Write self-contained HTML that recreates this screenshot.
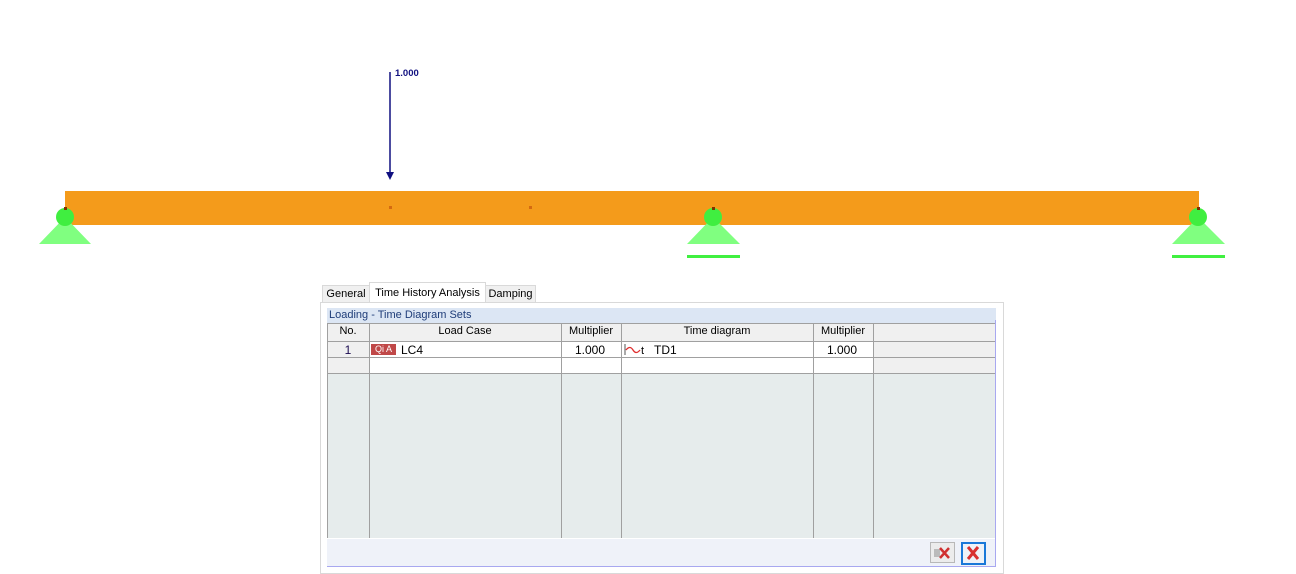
<!DOCTYPE html>
<html><head><style>
body{margin:0;width:1296px;height:569px;background:#fff;position:relative;overflow:hidden;font-family:"Liberation Sans",sans-serif;font-size:11px;color:#000}
.a{position:absolute}
.vl{position:absolute;top:323px;height:215px;width:1px;background:#a0a0a0}
.hl{position:absolute;left:327px;width:546px;height:1px;background:#a0a0a0}
.t{position:absolute;top:325px;text-align:center;font-size:11px}
</style></head><body>
<svg class="a" style="left:0;top:0" width="1296" height="280">
<rect x="65" y="191" width="1134" height="34" fill="#f49b1b"/>
<rect x="389" y="206" width="3" height="3" fill="#d46a10"/>
<rect x="529" y="206" width="3" height="3" fill="#d46a10"/>
<line x1="390" y1="72" x2="390" y2="172" stroke="#101080" stroke-width="1.5"/>
<polygon points="386,172 394,172 390,180" fill="#101080"/>
<text x="395" y="76" font-family="Liberation Sans" font-weight="bold" font-size="9.5" fill="#101080">1.000</text>
<g fill="#80ff80">
<polygon points="65,217 91,244 39,244"/>
<polygon points="713,217 740,244 687,244"/>
<polygon points="1198,217 1225,244 1172,244"/>
</g>
<rect x="687" y="255" width="53" height="3" fill="#40f040"/>
<rect x="1172" y="255" width="53" height="3" fill="#40f040"/>
<g fill="#40ee40"><circle cx="65" cy="217" r="9"/><circle cx="713" cy="217" r="9"/><circle cx="1198" cy="217" r="9"/></g>
<g fill="#803000"><rect x="64" y="207" width="3" height="3"/><rect x="712" y="207" width="3" height="3"/><rect x="1197" y="207" width="3" height="3"/></g>
</svg>
<!-- tabs -->
<div class="a" style="left:322px;top:285px;width:46px;height:17px;border:1px solid #d9d9d9;border-bottom:none;background:#f0f0f0;text-align:center;line-height:17px">General</div>
<div class="a" style="left:369px;top:282px;width:115px;height:21px;border:1px solid #d9d9d9;border-bottom:none;background:#fff;text-align:center;line-height:20px">Time History Analysis</div>
<div class="a" style="left:485px;top:285px;width:49px;height:17px;border:1px solid #d9d9d9;border-bottom:none;background:#f0f0f0;text-align:center;line-height:17px">Damping</div>
<div class="a" style="left:320px;top:302px;width:682px;height:270px;border:1px solid #d9d9d9;background:#fff"></div>
<div class="a" style="left:327px;top:308px;width:669px;height:15px;background:#dce6f4;color:#1e3c78;line-height:15px;padding-left:2px;box-sizing:border-box">Loading - Time Diagram Sets</div>
<div class="a" style="left:327px;top:323px;width:668px;height:215px;background:#e6ecec"></div>
<div class="a" style="left:995px;top:320px;width:1px;height:247px;background:#a8a8f0"></div>
<div class="a" style="left:327px;top:323px;width:668px;height:18px;background:#f0f0f0"></div>
<div class="a" style="left:327px;top:341px;width:42px;height:32px;background:#f0f0f0"></div>
<div class="a" style="left:370px;top:341px;width:503px;height:32px;background:#fff"></div>
<div class="a" style="left:874px;top:341px;width:121px;height:32px;background:#f0f0f0"></div>
<div class="hl" style="top:323px;width:668px"></div>
<div class="hl" style="top:341px;width:668px"></div>
<div class="hl" style="top:357px;width:668px"></div>
<div class="hl" style="top:373px;width:668px"></div>
<div class="vl" style="left:327px"></div>
<div class="vl" style="left:369px"></div>
<div class="vl" style="left:561px"></div>
<div class="vl" style="left:621px"></div>
<div class="vl" style="left:813px"></div>
<div class="vl" style="left:873px"></div>
<div class="t" style="left:327px;width:42px;color:#000">No.</div>
<div class="t" style="left:369px;width:192px">Load Case</div>
<div class="t" style="left:561px;width:60px">Multiplier</div>
<div class="t" style="left:621px;width:192px">Time diagram</div>
<div class="t" style="left:813px;width:60px">Multiplier</div>
<div class="a" style="left:327px;top:343px;width:42px;text-align:center;color:#1a0a50;font-size:12px">1</div>
<div class="a" style="left:371px;top:344px;width:25px;height:11px;background:#c04848;color:#fff;font-size:9px;line-height:11px;text-align:center">Qi A</div>
<div class="a" style="left:401px;top:343px;font-size:12px">LC4</div>
<div class="a" style="left:561px;top:343px;width:44px;text-align:right;font-size:12px">1.000</div>
<svg class="a" style="left:624px;top:344px" width="30" height="12"><line x1="1" y1="0" x2="1" y2="11" stroke="#555"/><path d="M2 6 Q6 1 9 6 T16 6" stroke="#e03030" fill="none" stroke-width="1.3"/><text x="17" y="10" font-size="11" font-family="Liberation Sans">t</text></svg>
<div class="a" style="left:654px;top:343px;font-size:12px">TD1</div>
<div class="a" style="left:813px;top:343px;width:44px;text-align:right;font-size:12px">1.000</div>
<div class="a" style="left:327px;top:538px;width:668px;height:28px;background:#eff2f9;border-top:1px solid #fff"></div>
<div class="a" style="left:327px;top:566px;width:669px;height:1px;background:#a8a8f0"></div>
<div class="a" style="left:930px;top:542px;width:23px;height:19px;border:1px solid #b8b8b8;background:#ececec"></div>
<svg class="a" style="left:934px;top:545px" width="18" height="16"><rect x="0" y="4" width="6" height="8" fill="#bbb"/><path d="M6 3 L15 13 M15 3 L6 13" stroke="#d03030" stroke-width="2.5"/></svg>
<div class="a" style="left:961px;top:542px;width:21px;height:19px;border:2px solid #1a78d8;background:#eef2f8"></div>
<svg class="a" style="left:965px;top:545px" width="16" height="16"><path d="M3 2 L13 14 M13 2 L3 14" stroke="#d83030" stroke-width="3"/></svg>
</body></html>
